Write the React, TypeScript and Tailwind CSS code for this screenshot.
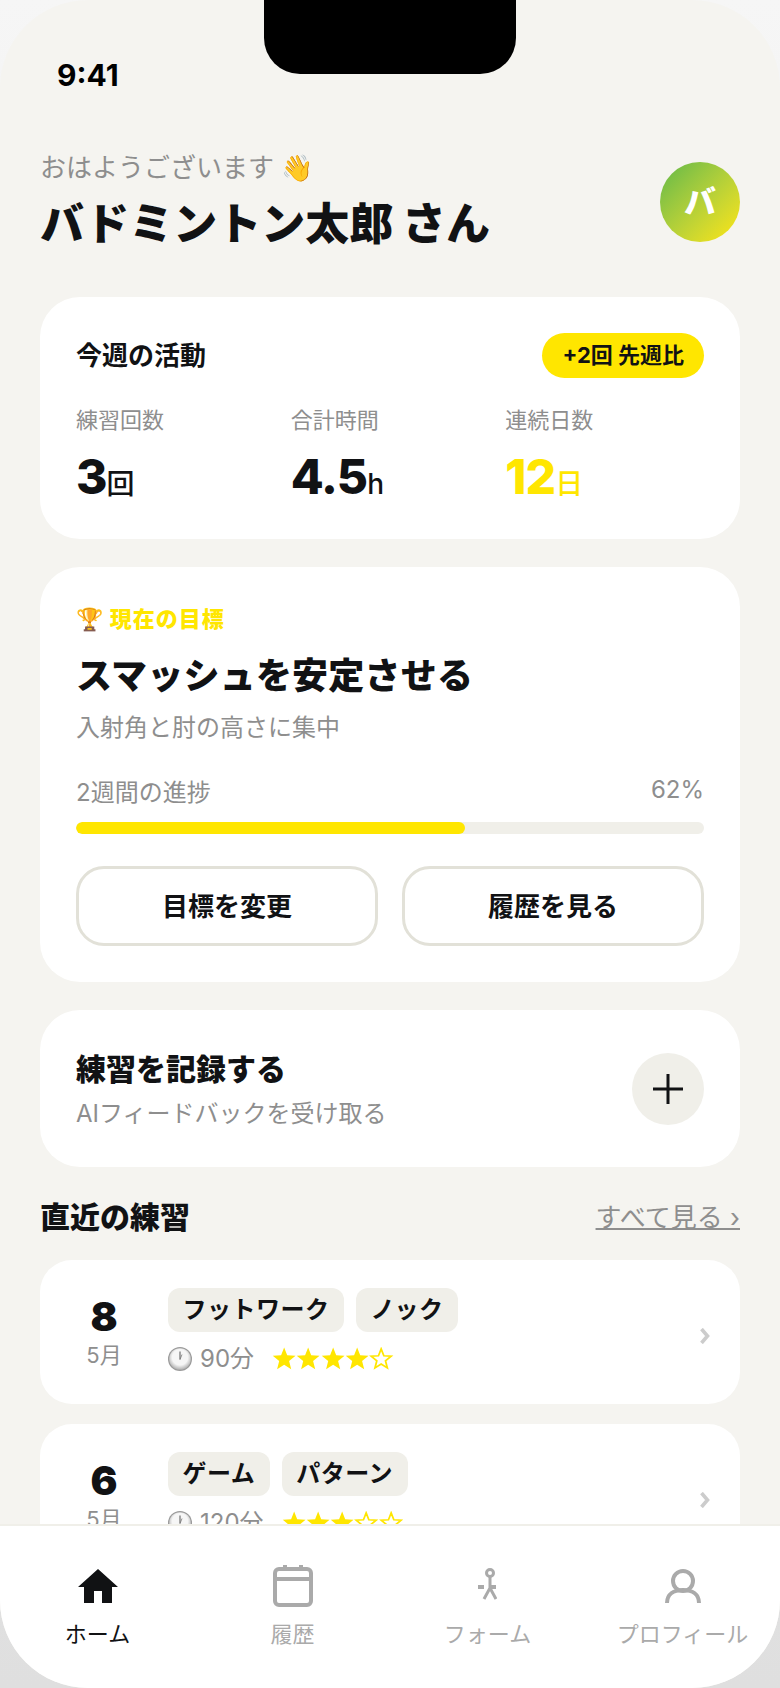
import type { ReactNode } from 'react';

const FONT = "font-['Inter','Noto_Sans_CJK_JP',sans-serif]";
const STAR = '12,0.5 15.06,8.29 23.4,8.8 16.95,14.1 19.05,22.2 12,17.7 4.95,22.2 7.05,14.1 0.6,8.8 8.94,8.29';

function Tag({ children }: { children: ReactNode }) {
  return (
    <span className="flex h-[44px] items-center rounded-[12px] bg-[#f0efe9] px-[14.5px] text-[24px] font-semibold tracking-[0.5px] text-[#111214]">
      {children}
    </span>
  );
}

// Small wall clock used in front of the duration
function ClockIcon() {
  return (
    <svg viewBox="0 0 24 24" className="h-[24px] w-[24px] shrink-0">
      <defs>
        <radialGradient id="clockFace" cx="50%" cy="42%" r="60%">
          <stop offset="60%" stopColor="#f6f6f6" />
          <stop offset="100%" stopColor="#a9a9a9" />
        </radialGradient>
      </defs>
      <circle cx="12" cy="12" r="12" fill="#9a9a9a" />
      <circle cx="12" cy="12" r="10.8" fill="url(#clockFace)" />
      <path d="M12 12.5V4.5" stroke="#555555" strokeWidth="1" />
      <path d="M12 12.5L14 7.5" stroke="#777777" strokeWidth="0.8" />
    </svg>
  );
}

function Stars({ filled }: { filled: number }) {
  return (
    <span className="ml-[18px] flex text-[#ffe600]">
      {[0, 1, 2, 3, 4].map((i) => (
        <svg key={i} viewBox="0 0 24 24" className="h-[24px] w-[24.3px]">
          {i < filled ? (
            <polygon points={STAR} fill="currentColor" />
          ) : (
            <polygon
              points={STAR}
              fill="none"
              stroke="currentColor"
              strokeWidth="2"
              transform="translate(1.5 1.5) scale(0.875)"
            />
          )}
        </svg>
      ))}
    </span>
  );
}

function Session(props: { day: number; tags: string[]; mins: number; stars: number }) {
  return (
    <div className="flex h-[144px] shrink-0 items-start rounded-[32px] bg-white pl-[28px] pr-[30px] pt-[28px]">
      <div className="mt-[5px] flex w-[72px] shrink-0 flex-col items-center">
        <span className="text-[40px] leading-[48px] font-black text-[#111214]">{props.day}</span>
        <span className="text-[22px] leading-[28px] text-[#8e8e8e]">5月</span>
      </div>
      <div className="ml-[28px] flex flex-1 flex-col gap-[13px]">
        <div className="flex gap-[12px]">
          {props.tags.map((t) => (
            <Tag key={t}>{t}</Tag>
          ))}
        </div>
        <div className="flex h-[28px] items-center">
          <ClockIcon />
          <span className="ml-[8px] text-[24px] text-[#8e8e8e]">{props.mins}分</span>
          <Stars filled={props.stars} />
        </div>
      </div>
      <svg viewBox="0 0 10 16" className="-mt-[20px] h-[16px] w-[10px] shrink-0 self-center" fill="none" stroke="#cccccc" strokeWidth="3.6">
        <path d="M1.5 1l6 7-6 7" />
      </svg>
    </div>
  );
}

function Stat(props: { label: string; value: string; unit: string; accent?: boolean }) {
  const color = props.accent ? 'text-[#ffe600]' : 'text-[#111214]';
  return (
    <div className="flex flex-col">
      <span className="text-[22px] leading-[32px] text-[#8e8e8e]">{props.label}</span>
      <span className={`mt-[13px] text-[48px] leading-[56px] font-extrabold tracking-[-1px] ${color}`}>
        {props.value}
        <span className="text-[28px] font-medium tracking-normal">{props.unit}</span>
      </span>
    </div>
  );
}

function NavItem(props: { label: string; active?: boolean; icon: ReactNode }) {
  return (
    <div
      className={`flex flex-1 flex-col items-center gap-[11px] ${props.active ? 'text-[#111214]' : 'text-[#aaaaaa]'}`}
    >
      <div className="flex h-[44px] w-[44px] items-center justify-center">{props.icon}</div>
      <span className="text-[22px] leading-[30px] font-normal">{props.label}</span>
    </div>
  );
}

export default function App() {
  return (
    <div className={`${FONT} h-[1688px] w-[780px] overflow-hidden bg-gradient-to-b from-[#f6f6f6] to-[#dfdfdf]`}>
      <div className="relative flex h-full flex-col overflow-hidden rounded-[88px] bg-[#f5f4f0]">
        {/* notch */}
        <div className="absolute left-[264px] top-0 z-20 h-[74px] w-[252px] rounded-b-[36px] bg-black" />

        <div className="h-[112px] shrink-0 pl-[57px] pt-[53px] text-[30px] leading-[44px] font-bold text-black">9:41</div>

        <div className="flex min-h-0 flex-1 flex-col overflow-hidden px-[40px]">
          <div className="mt-[38px] flex items-center justify-between">
            <div>
              <div className="text-[26px] leading-[36px] text-[#8e8e8e]">おはようございます 👋</div>
              <div className="mt-[8px] text-[44px] leading-[60px] font-black text-[#111214]">バドミントン太郎 さん</div>
            </div>
            <div className="flex h-[80px] w-[80px] items-center justify-center rounded-full bg-gradient-to-br from-[#5cb848] to-[#ffe600] text-[32px] font-black text-white">
              バ
            </div>
          </div>

          <div className="mt-[43px] shrink-0 rounded-[40px] bg-white px-[36px] pt-[36px] pb-[27px]">
            <div className="flex items-center justify-between">
              <span className="text-[26px] font-bold text-[#111214]">今週の活動</span>
              <span className="rounded-full bg-[#ffe600] px-[20px] py-[6px] text-[22px] leading-[33px] font-bold text-[#111214]">
                +2回 先週比
              </span>
            </div>
            <div className="mt-[26px] grid grid-cols-3 gap-[16px]">
              <Stat label="練習回数" value="3" unit="回" />
              <Stat label="合計時間" value="4.5" unit="h" />
              <Stat label="連続日数" value="12" unit="日" accent />
            </div>
          </div>

          <div className="mt-[28px] shrink-0 rounded-[40px] bg-white p-[36px]">
            <div className="text-[22px] leading-[32px] font-extrabold tracking-[1px] text-[#ffe600]">🏆 現在の目標</div>
            <div className="mt-[15px] text-[36px] leading-[52px] font-black tracking-[0.2px] text-[#111214]">スマッシュを安定させる</div>
            <div className="mt-[9px] text-[24px] leading-[34px] text-[#8e8e8e]">入射角と肘の高さに集中</div>
            <div className="mt-[30px] flex items-start justify-between text-[24px] text-[#8e8e8e]">
              <span className="leading-[36px]">2週間の進捗</span>
              <span className="leading-[30px]">62%</span>
            </div>
            <div className="mt-[11px] h-[12px] overflow-hidden rounded-full bg-[#f0efe9]">
              <div className="h-full w-[62%] rounded-full bg-[#ffe600]" />
            </div>
            <div className="mt-[32px] flex gap-[24px]">
              <button className="h-[80px] flex-1 rounded-[28px] border-[3px] border-[#e2e1d8] text-[26px] font-bold text-[#111214]">
                目標を変更
              </button>
              <button className="h-[80px] flex-1 rounded-[28px] border-[3px] border-[#e2e1d8] text-[26px] font-bold text-[#111214]">
                履歴を見る
              </button>
            </div>
          </div>

          <div className="mt-[28px] flex h-[157px] shrink-0 items-center justify-between rounded-[40px] bg-white px-[36px]">
            <div>
              <div className="text-[30px] leading-[44px] font-black text-[#111214]">練習を記録する</div>
              <div className="mt-[7px] text-[24px] leading-[32px] text-[#8e8e8e]">AIフィードバックを受け取る</div>
            </div>
            <div className="flex h-[72px] w-[72px] items-center justify-center rounded-full bg-[#f0efe9]">
              <svg viewBox="0 0 32 32" className="h-[32px] w-[32px]" stroke="#111214" strokeWidth="3" fill="none">
                <path d="M16 1v30M1 16h30" />
              </svg>
            </div>
          </div>

          <div className="mt-[28px] flex shrink-0 items-center justify-between">
            <span className="text-[30px] leading-[44px] font-black text-[#111214]">直近の練習</span>
            <span className="text-[26px] text-[#8e8e8e] underline decoration-2">すべて見る ›</span>
          </div>

          <div className="mt-[21px] flex flex-col gap-[20px]">
            <Session day={8} tags={['フットワーク', 'ノック']} mins={90} stars={4} />
            <Session day={6} tags={['ゲーム', 'パターン']} mins={120} stars={3} />
          </div>
        </div>

        {/* tab bar */}
        <div className="flex h-[164px] shrink-0 border-t-2 border-[#f0efe9] bg-white pt-[38px]">
          <NavItem
            label="ホーム"
            active
            icon={
              <svg viewBox="0 0 40 34" className="h-[34px] w-[40px]" fill="currentColor">
                <path d="M20 0L40 18H34V34H24V22H16V34H6V18H0z" />
              </svg>
            }
          />
          <NavItem
            label="履歴"
            icon={
              <svg viewBox="0 0 40 42" className="h-[42px] w-[40px]" fill="none" stroke="currentColor" strokeWidth="4">
                <rect x="2" y="4" width="36" height="36" rx="4" />
                <path d="M2 14h36M12 0v6M28 0v6" />
              </svg>
            }
          />
          <NavItem
            label="フォーム"
            icon={
              <svg viewBox="0 0 19 32" className="mt-[4px] h-[32px] w-[19px] self-start" fill="none" stroke="currentColor" strokeWidth="3">
                <circle cx="12" cy="5" r="3.5" />
                <path d="M12 9v11M12 20L6 31M12 20l6 11" />
                <path d="M0 19h6M12 19h6" strokeWidth="4" />
              </svg>
            }
          />
          <NavItem
            label="プロフィール"
            icon={
              <svg viewBox="0 0 36 34" className="h-[34px] w-[36px]" fill="none" stroke="currentColor" strokeWidth="4">
                <circle cx="18" cy="12" r="10" />
                <path d="M2 34c0-9 7-13 16-13s16 4 16 13" />
              </svg>
            }
          />
        </div>
      </div>
    </div>
  );
}
